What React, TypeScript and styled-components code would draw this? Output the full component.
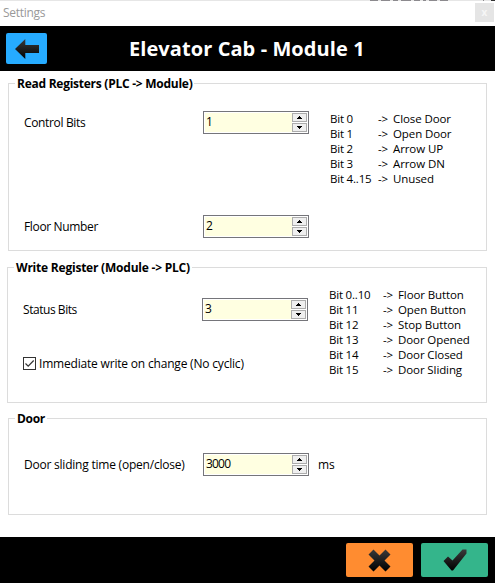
import React, { useState } from "react";
import styled, { createGlobalStyle } from "styled-components";

const GlobalStyle = createGlobalStyle`
  *, *::before, *::after { box-sizing: border-box; }
  html, body { margin: 0; padding: 0; background: #fff; overflow: hidden; }
  body { font-family: "Open Sans", "Noto Sans", sans-serif; font-size: 12px; color: #000; }
`;

const Window = styled.main`
  width: 495px;
  height: 583px;
  display: flex;
  flex-direction: column;
  background: #fff;
`;

/* Sliver of the parent window that shows above the dialog. */
const ParentEdge = styled.div`
  height: 1px;
  flex: none;
  padding: 0 0 0 370px;
  display: flex;
  gap: 3px;
  background: #e6e6e6;
`;

const EdgeMark = styled.span<{ $w: number; $push?: number; $dark?: boolean }>`
  width: ${(p) => p.$w}px;
  margin-left: ${(p) => p.$push ?? 0}px;
  background: ${(p) => (p.$dark ? "#333" : "#8c8a8e")};
`;

const TitleBar = styled.div`
  height: 25px;
  flex: none;
  display: flex;
  justify-content: space-between;
  padding: 2px 1px 0 3px;
`;

const WindowTitle = styled.span`
  line-height: 20px;
  color: #999;
  font-size: 12px;
  letter-spacing: -0.3px;
`;

const CloseButton = styled.button`
  width: 19px;
  height: 19px;
  padding: 0 0 2px;
  border: 0;
  background: #e5e5e5;
  color: #f6f6f6;
  font: bold 10px/16px "Open Sans", sans-serif;
`;

const Header = styled.header`
  height: 45px;
  flex: none;
  display: grid;
  grid-template-columns: 41px 1fr;
  align-items: center;
  padding: 0 6px 0 6px;
  background: #000;
`;

const Heading = styled.h1`
  margin: 0 0 0 82px;
  color: #fff;
  font-size: 20px;
  line-height: 28px;
  font-weight: 700;
  letter-spacing: 0.08px;
  white-space: nowrap;
`;

const ActionButton = styled.button<{ $color: string; $w: number; $h: number }>`
  width: ${(p) => p.$w}px;
  height: ${(p) => p.$h}px;
  padding: 0;
  border: 0;
  border-radius: 2px;
  background: ${(p) => p.$color};
  display: flex;
  align-items: center;
  justify-content: center;
`;

const Body = styled.div`
  flex: 1;
  padding: 12px 8px 0;
`;

const Group = styled.section<{ $h: number; $gap: number; $outset?: number }>`
  height: ${(p) => p.$h}px;
  margin: 0 0 ${(p) => p.$gap}px ${(p) => -(p.$outset ?? 0)}px;
  border: 1px solid #dcdcdc;
`;

const Legend = styled.h2<{ $spacing: number }>`
  width: max-content;
  height: 16px;
  margin: -9px 0 0 6px;
  padding: 0 2px;
  background: #fff;
  font-size: 12px;
  line-height: 17px;
  font-weight: 700;
  letter-spacing: ${(p) => p.$spacing}px;
`;

const Row = styled.div<{ $top: number }>`
  height: 23px;
  margin-top: ${(p) => p.$top}px;
  padding-left: 15px;
  display: grid;
  grid-template-columns: 179px 106px 1fr;
`;

const Label = styled.span<{ $spacing?: number }>`
  line-height: 24px;
  white-space: nowrap;
  letter-spacing: ${(p) => p.$spacing ?? -0.2}px;
`;

const Unit = styled(Label)`
  margin-left: 9px;
`;

const SpinBox = styled.div`
  width: 106px;
  height: 23px;
  border: 1px solid #75757a;
  padding: 1px;
  display: flex;
  background: #fff;
`;

const SpinInput = styled.input`
  width: 87px;
  height: 19px;
  border: 0;
  outline: 0;
  padding: 0 0 2px 1px;
  background: #ffffe1;
  color: #000;
  font: 12px/17px "Open Sans", "Noto Sans", sans-serif;
  letter-spacing: -0.8px;
`;

const SpinButtons = styled.div`
  width: 15px;
  display: grid;
  grid-template-rows: 9px 9px;
  row-gap: 1px;
`;

const SpinButton = styled.button`
  padding: 0;
  border: 1px solid #acacac;
  background: #efefef;
  display: flex;
  align-items: center;
  justify-content: center;
`;

const BitList = styled.dl<{ $first: number; $lift: number }>`
  margin: ${(p) => -p.$lift}px 0 0 21px;
  height: max-content;
  display: grid;
  grid-template-columns: ${(p) => p.$first}px 15px max-content;
  grid-auto-rows: 15px;
  line-height: 15px;
  font-size: 11.5px;
  white-space: nowrap;
`;

const Bit = styled.dt`
  letter-spacing: -0.2px;
`;

const Meaning = styled.dd`
  margin: 0;
  letter-spacing: -0.1px;
`;

const CheckRow = styled.label`
  height: 15px;
  margin: 35px 0 0 15px;
  display: flex;
  align-items: center;
  gap: 3px;
  line-height: 15px;
  letter-spacing: -0.19px;
`;

const CheckBox = styled.span`
  width: 13px;
  height: 13px;
  border: 1px solid #333;
  display: flex;
`;

const HiddenCheck = styled.input`
  display: none;
`;

const Footer = styled.footer`
  height: 46px;
  flex: none;
  display: flex;
  justify-content: flex-end;
  gap: 8px;
  padding: 6px 7px 0 0;
  background: #000;
`;

const InkGradient = ({ id }: { id: string }) => (
  <linearGradient id={id} x1="0" y1="0" x2="0" y2="1">
    <stop offset="0" stopColor="#3a3a3a" />
    <stop offset="1" stopColor="#000" />
  </linearGradient>
);

const BackIcon = () => (
  <svg width="24" height="20" viewBox="0 0 24 20">
    <defs><InkGradient id="ink-back" /></defs>
    <path d="M0 10 L10.3 0 V6 H24 V14 H10.3 V20 Z" fill="url(#ink-back)" />
  </svg>
);

const CancelIcon = () => (
  <svg width="23" height="23" viewBox="0 0 23 23">
    <defs><InkGradient id="ink-cancel" /></defs>
    <path
      d="M5.5 .5 L11.5 6.5 L17.5 .5 L22.5 5.5 L16.5 11.5 L22.5 17.5 L17.5 22.5 L11.5 16.5 L5.5 22.5 L.5 17.5 L6.5 11.5 L.5 5.5 Z"
      fill="url(#ink-cancel)"
    />
  </svg>
);

const AcceptIcon = () => (
  <svg width="24" height="22" viewBox="0 0 24 22">
    <defs><InkGradient id="ink-accept" /></defs>
    <path d="M.5 12 L5 7.5 L9.5 11.5 L19.5 .5 H23.5 V4.5 L10 21.5 H8.5 Z" fill="url(#ink-accept)" />
  </svg>
);

const Triangle = ({ down }: { down?: boolean }) => (
  <svg width="5" height="3" viewBox="0 0 5 3" shapeRendering="crispEdges">
    <path d={down ? "M0 0H5V1H4V2H3V3H2V2H1V1H0Z" : "M2 0H3V1H4V2H5V3H0V2H1V1H2Z"} fill="#000" />
  </svg>
);

function Spinner({ initial }: { initial: number }) {
  const [value, setValue] = useState(initial);
  return (
    <SpinBox>
      <SpinInput value={value} onChange={(e) => setValue(Number(e.target.value) || 0)} />
      <SpinButtons>
        <SpinButton aria-label="Increase" onClick={() => setValue(value + 1)}><Triangle /></SpinButton>
        <SpinButton aria-label="Decrease" onClick={() => setValue(value - 1)}><Triangle down /></SpinButton>
      </SpinButtons>
    </SpinBox>
  );
}

type BitRow = [string, string];

const controlBits: BitRow[] = [
  ["Bit 0", "Close Door"],
  ["Bit 1", "Open Door"],
  ["Bit 2", "Arrow UP"],
  ["Bit 3", "Arrow DN"],
  ["Bit 4..15", "Unused"],
];

const statusBits: BitRow[] = [
  ["Bit 0..10", "Floor Button"],
  ["Bit 11", "Open Button"],
  ["Bit 12", "Stop Button"],
  ["Bit 13", "Door Opened"],
  ["Bit 14", "Door Closed"],
  ["Bit 15", "Door Sliding"],
];

const Bits = ({ rows, first, lift }: { rows: BitRow[]; first: number; lift: number }) => (
  <BitList $first={first} $lift={lift}>
    {rows.map(([bit, meaning]) => (
      <React.Fragment key={bit}>
        <Bit>{bit}</Bit>
        <Bit as="span">-&gt;</Bit>
        <Meaning>{meaning}</Meaning>
      </React.Fragment>
    ))}
  </BitList>
);

export default function App() {
  const [immediate, setImmediate] = useState(true);
  return (
    <Window>
      <GlobalStyle />
      <ParentEdge>
        <EdgeMark $w={8} />
        <EdgeMark $w={9} />
        <EdgeMark $w={5} />
        <EdgeMark $w={10} />
        <EdgeMark $w={6} />
        <EdgeMark $w={3} />
        <EdgeMark $w={8} />
        <EdgeMark $w={8} />
        <EdgeMark $w={1} $push={32} />
        <EdgeMark $w={4} $push={4} $dark />
      </ParentEdge>
      <TitleBar>
        <WindowTitle>Settings</WindowTitle>
        <CloseButton aria-label="Close">x</CloseButton>
      </TitleBar>
      <Header>
        <ActionButton $color="#26abff" $w={41} $h={31} aria-label="Back"><BackIcon /></ActionButton>
        <Heading>Elevator Cab - Module 1</Heading>
      </Header>
      <Body>
        <Group $h={168} $gap={16}>
          <Legend $spacing={-0.26}>Read Registers (PLC -&gt; Module)</Legend>
          <Row $top={20}>
            <Label $spacing={-0.35}>Control Bits</Label>
            <Spinner initial={1} />
            <Bits rows={controlBits} first={48} lift={0} />
          </Row>
          <Row $top={81}>
            <Label $spacing={-0.35}>Floor Number</Label>
            <Spinner initial={2} />
          </Row>
        </Group>
        <Group $h={136} $gap={15} $outset={1}>
          <Legend $spacing={-0.22}>Write Register (Module -&gt; PLC)</Legend>
          <Row $top={23}>
            <Label $spacing={-0.45}>Status Bits</Label>
            <Spinner initial={3} />
            <Bits rows={statusBits} first={54} lift={11} />
          </Row>
          <CheckRow>
            <HiddenCheck type="checkbox" checked={immediate} onChange={(e) => setImmediate(e.target.checked)} />
            <CheckBox>
              {immediate && (
                <svg width="11" height="11" viewBox="0 0 11 11">
                  <path d="M1.5 5.5 L4.2 8.2 L9.7 2.5" fill="none" stroke="#333" strokeWidth="1.2" />
                </svg>
              )}
            </CheckBox>
            Immediate write on change (No cyclic)
          </CheckRow>
        </Group>
        <Group $h={97} $gap={0}>
          <Legend $spacing={-0.3}>Door</Legend>
          <Row $top={27}>
            <Label $spacing={-0.22}>Door sliding time (open/close)</Label>
            <Spinner initial={3000} />
            <Unit>ms</Unit>
          </Row>
        </Group>
      </Body>
      <Footer>
        <ActionButton $color="#ff8c30" $w={67} $h={34} aria-label="Cancel"><CancelIcon /></ActionButton>
        <ActionButton $color="#34b58b" $w={67} $h={34} aria-label="Accept"><AcceptIcon /></ActionButton>
      </Footer>
    </Window>
  );
}
